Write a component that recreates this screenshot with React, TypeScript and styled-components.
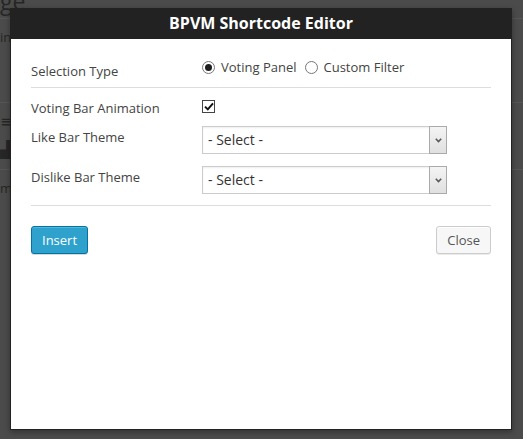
import styled, { createGlobalStyle } from "styled-components";

const GlobalStyle = createGlobalStyle`
  body {
    margin: 0;
    background: #4b4b4b;
    font-family: "Open Sans", "DejaVu Sans", sans-serif;
  }
`;

const App = () => {
  return (
    <Screen>
      <GlobalStyle />
      <Behind>
        <PageTitle>ge</PageTitle>
        <Rule />
        <PageText>in</PageText>
        <Rule $top={55} />
        <PageIcon>≡</PageIcon>
        <PageIcon>▟</PageIcon>
        <Rule $top={10} />
        <PageText>m</PageText>
      </Behind>

      <Modal>
        <Header>BPVM Shortcode Editor</Header>
        <Body>
          <Row $top={0}>
            <Label>Selection Type</Label>
            <Choices>
              <Choice>
                <Radio $checked />
                Voting Panel
              </Choice>
              <Choice>
                <Radio />
                Custom Filter
              </Choice>
            </Choices>
          </Row>
          <Divider $top={7} $bottom={9} />
          <Row $top={0}>
            <Label>Voting Bar Animation</Label>
            <Checkbox>
              <svg width="10" height="9" viewBox="0 0 10 9">
                <path
                  d="M1 4.6 L3.8 7.4 L9 1.4"
                  fill="none"
                  stroke="#111"
                  strokeWidth="2"
                />
              </svg>
            </Checkbox>
          </Row>
          <Row $top={9}>
            <Label>Like Bar Theme</Label>
            <Select>
              <SelectText>- Select -</SelectText>
              <SelectArrow>
                <svg width="7" height="5" viewBox="0 0 7 5">
                  <path d="M0.8 0.8 L3.5 3.6 L6.2 0.8" fill="none" stroke="#555" strokeWidth="1.5" />
                </svg>
              </SelectArrow>
            </Select>
          </Row>
          <Row $top={12}>
            <Label>Dislike Bar Theme</Label>
            <Select>
              <SelectText>- Select -</SelectText>
              <SelectArrow>
                <svg width="7" height="5" viewBox="0 0 7 5">
                  <path d="M0.8 0.8 L3.5 3.6 L6.2 0.8" fill="none" stroke="#555" strokeWidth="1.5" />
                </svg>
              </SelectArrow>
            </Select>
          </Row>
          <Divider $top={11} $bottom={20} />
          <Actions>
            <Button $primary>Insert</Button>
            <Button>Close</Button>
          </Actions>
        </Body>
      </Modal>
    </Screen>
  );
};

export default App;

const Screen = styled.div`
  position: relative;
  width: 523px;
  height: 439px;
  overflow: hidden;
  background: #4b4b4b;
`;

const Behind = styled.div`
  display: flex;
  flex-direction: column;
  color: #262626;
`;

const PageTitle = styled.div`
  font-size: 23px;
  line-height: 29px;
  margin-top: -13px;
  height: 31px;
`;

const PageText = styled.div`
  font-size: 13px;
  line-height: 20px;
  margin-top: 8px;
`;

const PageIcon = styled.div`
  font-size: 16px;
  line-height: 20px;
  margin-top: 8px;
`;

const Rule = styled.div<{ $top?: number }>`
  height: 1px;
  background: #565656;
  margin-top: ${(p) => p.$top ?? 0}px;
`;

const Modal = styled.div`
  position: absolute;
  left: 10px;
  top: 8px;
  width: 502px;
  height: 422px;
  box-sizing: border-box;
  border: 1px solid #222;
  background: #fff;
  display: flex;
  flex-direction: column;
  box-shadow: 0 2px 6px rgba(0, 0, 0, 0.35);
`;

const Header = styled.div`
  margin: -1px -1px 0;
  height: 31px;
  background: #222;
  color: #fff;
  font-size: 16px;
  font-weight: 700;
  line-height: 31px;
  text-align: center;
`;

const Body = styled.div`
  padding: 21px 20px 0;
  font-size: 13px;
  color: #444;
`;

const Row = styled.div<{ $top: number }>`
  display: flex;
  align-items: flex-start;
  margin-top: ${(p) => p.$top}px;
  min-height: 20px;
`;

const Label = styled.div`
  width: 171px;
  flex-shrink: 0;
  line-height: 20px;
  margin: 1px 0 -1px;
`;

const Choices = styled.div`
  display: flex;
  align-items: center;
  gap: 8px;
  line-height: 20px;
  margin-top: -3px;
`;

const Choice = styled.label`
  display: flex;
  align-items: center;
  gap: 6px;
  color: #444;
`;

const Radio = styled.span<{ $checked?: boolean }>`
  width: 13px;
  height: 13px;
  box-sizing: border-box;
  border-radius: 50%;
  border: 1px solid #767676;
  display: flex;
  align-items: center;
  justify-content: center;

  &::after {
    content: "";
    width: 7px;
    height: 7px;
    border-radius: 50%;
    background: ${(p) => (p.$checked ? "#1e1e1e" : "transparent")};
  }
`;

const Checkbox = styled.span`
  width: 13px;
  height: 13px;
  box-sizing: border-box;
  border: 1px solid #444;
  margin-top: 3px;
  display: flex;
  align-items: center;
  justify-content: center;
`;

const Select = styled.div`
  width: 245px;
  height: 28px;
  box-sizing: border-box;
  border: 1px solid #ccc;
  box-shadow: inset 0 1px 2px rgba(0, 0, 0, 0.07);
  display: flex;
  align-items: stretch;
`;

const SelectText = styled.div`
  flex: 1;
  padding-left: 5px;
  font-size: 14px;
  line-height: 26px;
  color: #333;
`;

const SelectArrow = styled.div`
  width: 18px;
  margin: -1px -1px -1px 0;
  box-sizing: border-box;
  border: 1px solid #aaa;
  background: linear-gradient(#f4f4f4, #e0e0e0);
  display: flex;
  align-items: center;
  justify-content: center;
`;

const Divider = styled.div<{ $top: number; $bottom: number }>`
  height: 1px;
  background: #ddd;
  margin: ${(p) => p.$top}px 0 ${(p) => p.$bottom}px;
`;

const Actions = styled.div`
  display: flex;
  justify-content: space-between;
`;

const Button = styled.button<{ $primary?: boolean }>`
  height: 28px;
  padding: 0 10px;
  border-radius: 3px;
  font-family: "Open Sans", "DejaVu Sans", sans-serif;
  font-size: 13px;
  line-height: 26px;
  cursor: pointer;
  border: 1px solid ${(p) => (p.$primary ? "#0074a2" : "#ccc")};
  background: ${(p) => (p.$primary ? "#2ea2cc" : "#f7f7f7")};
  color: ${(p) => (p.$primary ? "#fff" : "#555")};
  box-shadow: ${(p) =>
    p.$primary
      ? "inset 0 1px 0 rgba(120, 200, 230, 0.5), 0 1px 0 rgba(0, 0, 0, 0.15)"
      : "inset 0 1px 0 #fff, 0 1px 0 rgba(0, 0, 0, 0.08)"};
`;
